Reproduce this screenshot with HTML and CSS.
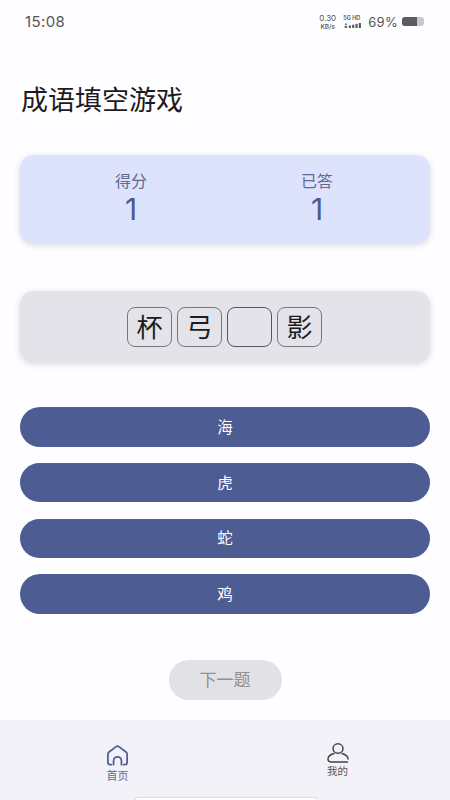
FILE: index.html
```html
<!DOCTYPE html>
<html lang="zh-CN">
<head>
  <meta charset="UTF-8" />
  <meta name="viewport" content="width=device-width, initial-scale=1.0" />
  <title>成语填空游戏</title>
  <link rel="stylesheet" href="styles.css">
</head>
<body>
  <div class="screen">
    <div class="status-bar">
      <span class="clock">15:08</span>
      <div class="status-right">
        <span class="net-speed"><span class="net-value">0.30</span><span class="net-unit">KB/s</span></span>
        <span class="signal">
          <span class="signal-label">5G HD</span>
          <svg width="20" height="5" viewBox="0 0 20 6">
            <circle cx="1.5" cy="1.500" r="1.200" fill="#666" />
            <rect x="0" y="3.500" width="3" height="2.500" fill="#666" />
            <rect x="5" y="3" width="2.500" height="3" fill="#555" />
            <rect x="9" y="2" width="2.500" height="4" fill="#555" />
            <rect x="13" y="1" width="2.500" height="5" fill="#555" />
            <rect x="17" y="0" width="2.500" height="6" fill="#555" />
          </svg>
        </span>
        <span class="battery-text">69%</span>
        <span class="battery"><span class="battery-level"></span></span>
      </div>
    </div>

    <main class="content">
      <h1 class="title">成语填空游戏</h1>

      <section class="card score-card">
        <div class="stat">
          <div class="stat-label">得分</div>
          <div class="stat-value">1</div>
        </div>
        <div class="stat">
          <div class="stat-label">已答</div>
          <div class="stat-value">1</div>
        </div>
      </section>

      <section class="card idiom-card">
        <div class="tile">杯</div>
        <div class="tile">弓</div>
        <div class="tile tile-empty"></div>
        <div class="tile">影</div>
      </section>

      <div class="options">
        <button class="option">海</button>
        <button class="option">虎</button>
        <button class="option">蛇</button>
        <button class="option">鸡</button>
      </div>

      <button class="next-btn">下一题</button>
    </main>

    <nav class="tabbar">
      <div class="tab tab-active">
        <svg width="26" height="24" viewBox="0 0 26 24" fill="none" stroke="#4e5d92" stroke-width="2" stroke-linecap="round" stroke-linejoin="round">
          <path d="M6 22.500H4.500A2.500 2.500 0 0 1 2 20V10.500A3 3 0 0 1 3 8.300L11 2.200a3 3 0 0 1 4 0l8 6.100a3 3 0 0 1 1 2.200V20a2.500 2.500 0 0 1-2.500 2.500H20" />
          <path d="M8.500 22.500V18a4.500 4.500 0 0 1 9 0v4.500" />
        </svg>
        <span>首页</span>
      </div>
      <div class="tab">
        <svg width="22" height="20" viewBox="0 0 22 20" fill="none" stroke="#44444c" stroke-width="1.500" stroke-linecap="round">
          <ellipse cx="11" cy="5.500" rx="5" ry="4.700" />
          <path d="M7 10.500C3.500 11.500 1 13.500 1 16c0 2 1.500 3 3.500 3H20.500" />
          <path d="M15 10.500c3.500 1 6 3 6 5.500" />
        </svg>
        <span>我的</span>
      </div>
      <div class="home-indicator"></div>
    </nav>
  </div>
</body>
</html>
```

FILE: styles.css
```css
* {
  box-sizing: border-box;
}
html, body {
  margin: 0;
  padding: 0;
}
body {
  font-family: "Noto Sans CJK SC", "Noto Sans", sans-serif;
  background: #fefdff;
}
.screen {
  width: 450px;
  height: 800px;
  display: flex;
  flex-direction: column;
  overflow: hidden;
}

/* status bar */
.status-bar {
  height: 43px;
  padding: 0 26px 0 25px;
  display: flex;
  justify-content: space-between;
  align-items: center;
  color: #555;
}
.clock {
  font-family: "Inter", sans-serif;
  font-size: 15px;
  letter-spacing: 0.4px;
}
.status-right {
  display: flex;
  align-items: center;
  gap: 4px;
}
.net-speed {
  display: flex;
  flex-direction: column;
  align-items: center;
  width: 21px;
  font-family: "Inter", sans-serif;
}
.net-value {
  font-size: 8px;
  line-height: 10px;
}
.net-unit {
  font-size: 6.500px;
  font-weight: 500;
  line-height: 8px;
}
.signal {
  display: flex;
  flex-direction: column;
  gap: 2px;
  margin: 0 1px;
}
.signal-label {
  font-family: "Inter", sans-serif;
  font-size: 5.500px;
  font-weight: 600;
  line-height: 6px;
  white-space: nowrap;
}
.signal svg {
  display: block;
}
.battery-text {
  font-family: "Inter", sans-serif;
  font-size: 13px;
  letter-spacing: 0.3px;
}
.battery {
  width: 22px;
  height: 9px;
  border-radius: 3px;
  background: #c9c9cb;
  overflow: hidden;
}
.battery-level {
  display: block;
  width: 15px;
  height: 100%;
  background: #5c5c5e;
}

/* main content */
.content {
  flex: 1;
  padding: 0 20px;
  display: flex;
  flex-direction: column;
}
.title {
  margin: 39px 0 0 1px;
  height: 34px;
  font-size: 27px;
  line-height: 34px;
  font-weight: 400;
  color: #1d1b20;
}
.card {
  width: 410px;
  border-radius: 14px;
  box-shadow: 0 2px 6px rgba(60, 60, 80, 0.2);
}
.score-card {
  margin-top: 39px;
  height: 88px;
  padding: 0 20px 2px 18px;
  background: #dde2fd;
  display: grid;
  grid-template-columns: 1fr 1fr;
  align-items: center;
}
.stat {
  text-align: center;
}
.stat-label {
  margin-bottom: 2px;
  font-size: 16px;
  line-height: 20px;
  color: #5f6a8e;
}
.stat-value {
  font-family: "Inter", sans-serif;
  font-size: 30px;
  line-height: 34px;
  color: #4b5b8c;
}
.idiom-card {
  margin-top: 48px;
  height: 71px;
  padding-right: 1px;
  background: #e4e3e9;
  display: flex;
  justify-content: center;
  align-items: center;
  gap: 5px;
}
.tile {
  width: 45px;
  height: 40px;
  border: 1px solid #77767d;
  border-radius: 8px;
  font-size: 26px;
  line-height: 36px;
  text-align: center;
  color: #1d1b20;
}
.tile-empty {
  border-color: #55555c;
}
.options {
  margin-top: 45px;
  display: flex;
  flex-direction: column;
  gap: 16.300px;
}
.option {
  height: 39.500px;
  border: none;
  border-radius: 20px;
  background: #4d5c92;
  color: #fff;
  font-family: inherit;
  font-size: 15.500px;
  padding: 0 0 2px;
}
.next-btn {
  align-self: center;
  margin-top: 46px;
  width: 113px;
  height: 40px;
  border: none;
  border-radius: 20px;
  background: #e2e2e6;
  color: #8f8f96;
  font-family: inherit;
  font-size: 17px;
  padding: 0 0 3px;
}

/* bottom tabs */
.tabbar {
  position: relative;
  height: 80px;
  background: #f3f2f8;
  display: flex;
}
.tab {
  flex: none;
  width: 225px;
  display: flex;
  flex-direction: column;
  align-items: center;
  padding-top: 23px;
  font-size: 10.500px;
  line-height: 14px;
  color: #55555c;
}
.tab-active {
  padding: 25px 0 0 10px;
  font-size: 11px;
  color: #5f6a8e;
}
.tab svg {
  display: block;
  margin-bottom: 1px;
}
.tab-active svg {
  width: 23px;
  height: 21px;
  margin-bottom: 2px;
}
.home-indicator {
  position: absolute;
  left: 135px;
  bottom: 0;
  width: 182px;
  height: 3px;
  background: #fefdff;
  border: 1px solid #dcdce0;
  border-bottom: none;
  border-radius: 2px 2px 0 0;
}
```
